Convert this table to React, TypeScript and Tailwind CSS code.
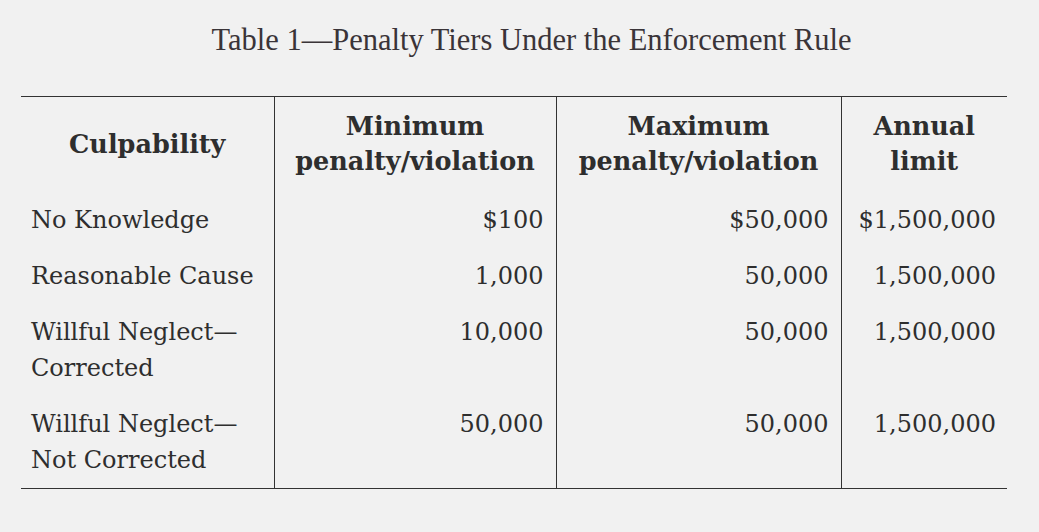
import React from "react";

const rows: [string[], string, string, string][] = [
  [["No Knowledge"], "$100", "$50,000", "$1,500,000"],
  [["Reasonable Cause"], "1,000", "50,000", "1,500,000"],
  [["Willful Neglect—", "Corrected"], "10,000", "50,000", "1,500,000"],
  [["Willful Neglect—", "Not Corrected"], "50,000", "50,000", "1,500,000"],
];

export default function App() {
  return (
    <div className="min-h-screen w-full bg-[#f1f1f1] pt-[23px] text-[#333]">
      <p
        className="pl-[24px] text-center text-[30.5px] leading-[35px] text-[#3a3438]"
        style={{ fontFamily: '"Liberation Serif", serif' }}
      >
        Table 1—Penalty Tiers Under the Enforcement Rule
      </p>
      <table
        className="ml-[21px] mt-[38px] w-[986px] table-fixed border-collapse text-[24px] leading-[36px] text-[#2e2e2e]"
        style={{ fontFamily: '"DejaVu Serif", serif' }}
      >
        <colgroup>
          <col className="w-[253px]" />
          <col className="w-[282px]" />
          <col className="w-[285px]" />
          <col className="w-[166px]" />
        </colgroup>
        <thead>
          <tr className="border-t border-[#333]">
            <th className="pt-[12px] pb-[13px] text-center align-middle text-[25.5px] font-bold leading-[35px]">
              Culpability
            </th>
            <th className="border-l border-[#333] pt-[12px] pb-[13px] text-center text-[25.5px] font-bold leading-[35px]">
              Minimum
              <br />
              penalty/violation
            </th>
            <th className="border-l border-[#333] pt-[12px] pb-[13px] text-center text-[25.5px] font-bold leading-[35px]">
              Maximum
              <br />
              penalty/violation
            </th>
            <th className="border-l border-[#333] pt-[12px] pb-[13px] text-center text-[25.5px] font-bold leading-[35px]">
              Annual
              <br />
              limit
            </th>
          </tr>
        </thead>
        <tbody>
          {rows.map(([label, min, max, annual], i) => (
            <tr key={i} className={i === rows.length - 1 ? "border-b border-[#333]" : ""}>
              <td className="pl-[10px] pt-[10px] pb-[10px] align-top">
                {label.map((l, j) => (
                  <div key={j}>{l}</div>
                ))}
              </td>
              <td className="border-l border-[#333] pr-[12px] pt-[10px] pb-[10px] text-right align-top">
                {min}
              </td>
              <td className="border-l border-[#333] pr-[12px] pt-[10px] pb-[10px] text-right align-top">
                {max}
              </td>
              <td className="border-l border-[#333] pr-[11px] pt-[10px] pb-[10px] text-right align-top">
                {annual}
              </td>
            </tr>
          ))}
        </tbody>
      </table>
    </div>
  );
}
